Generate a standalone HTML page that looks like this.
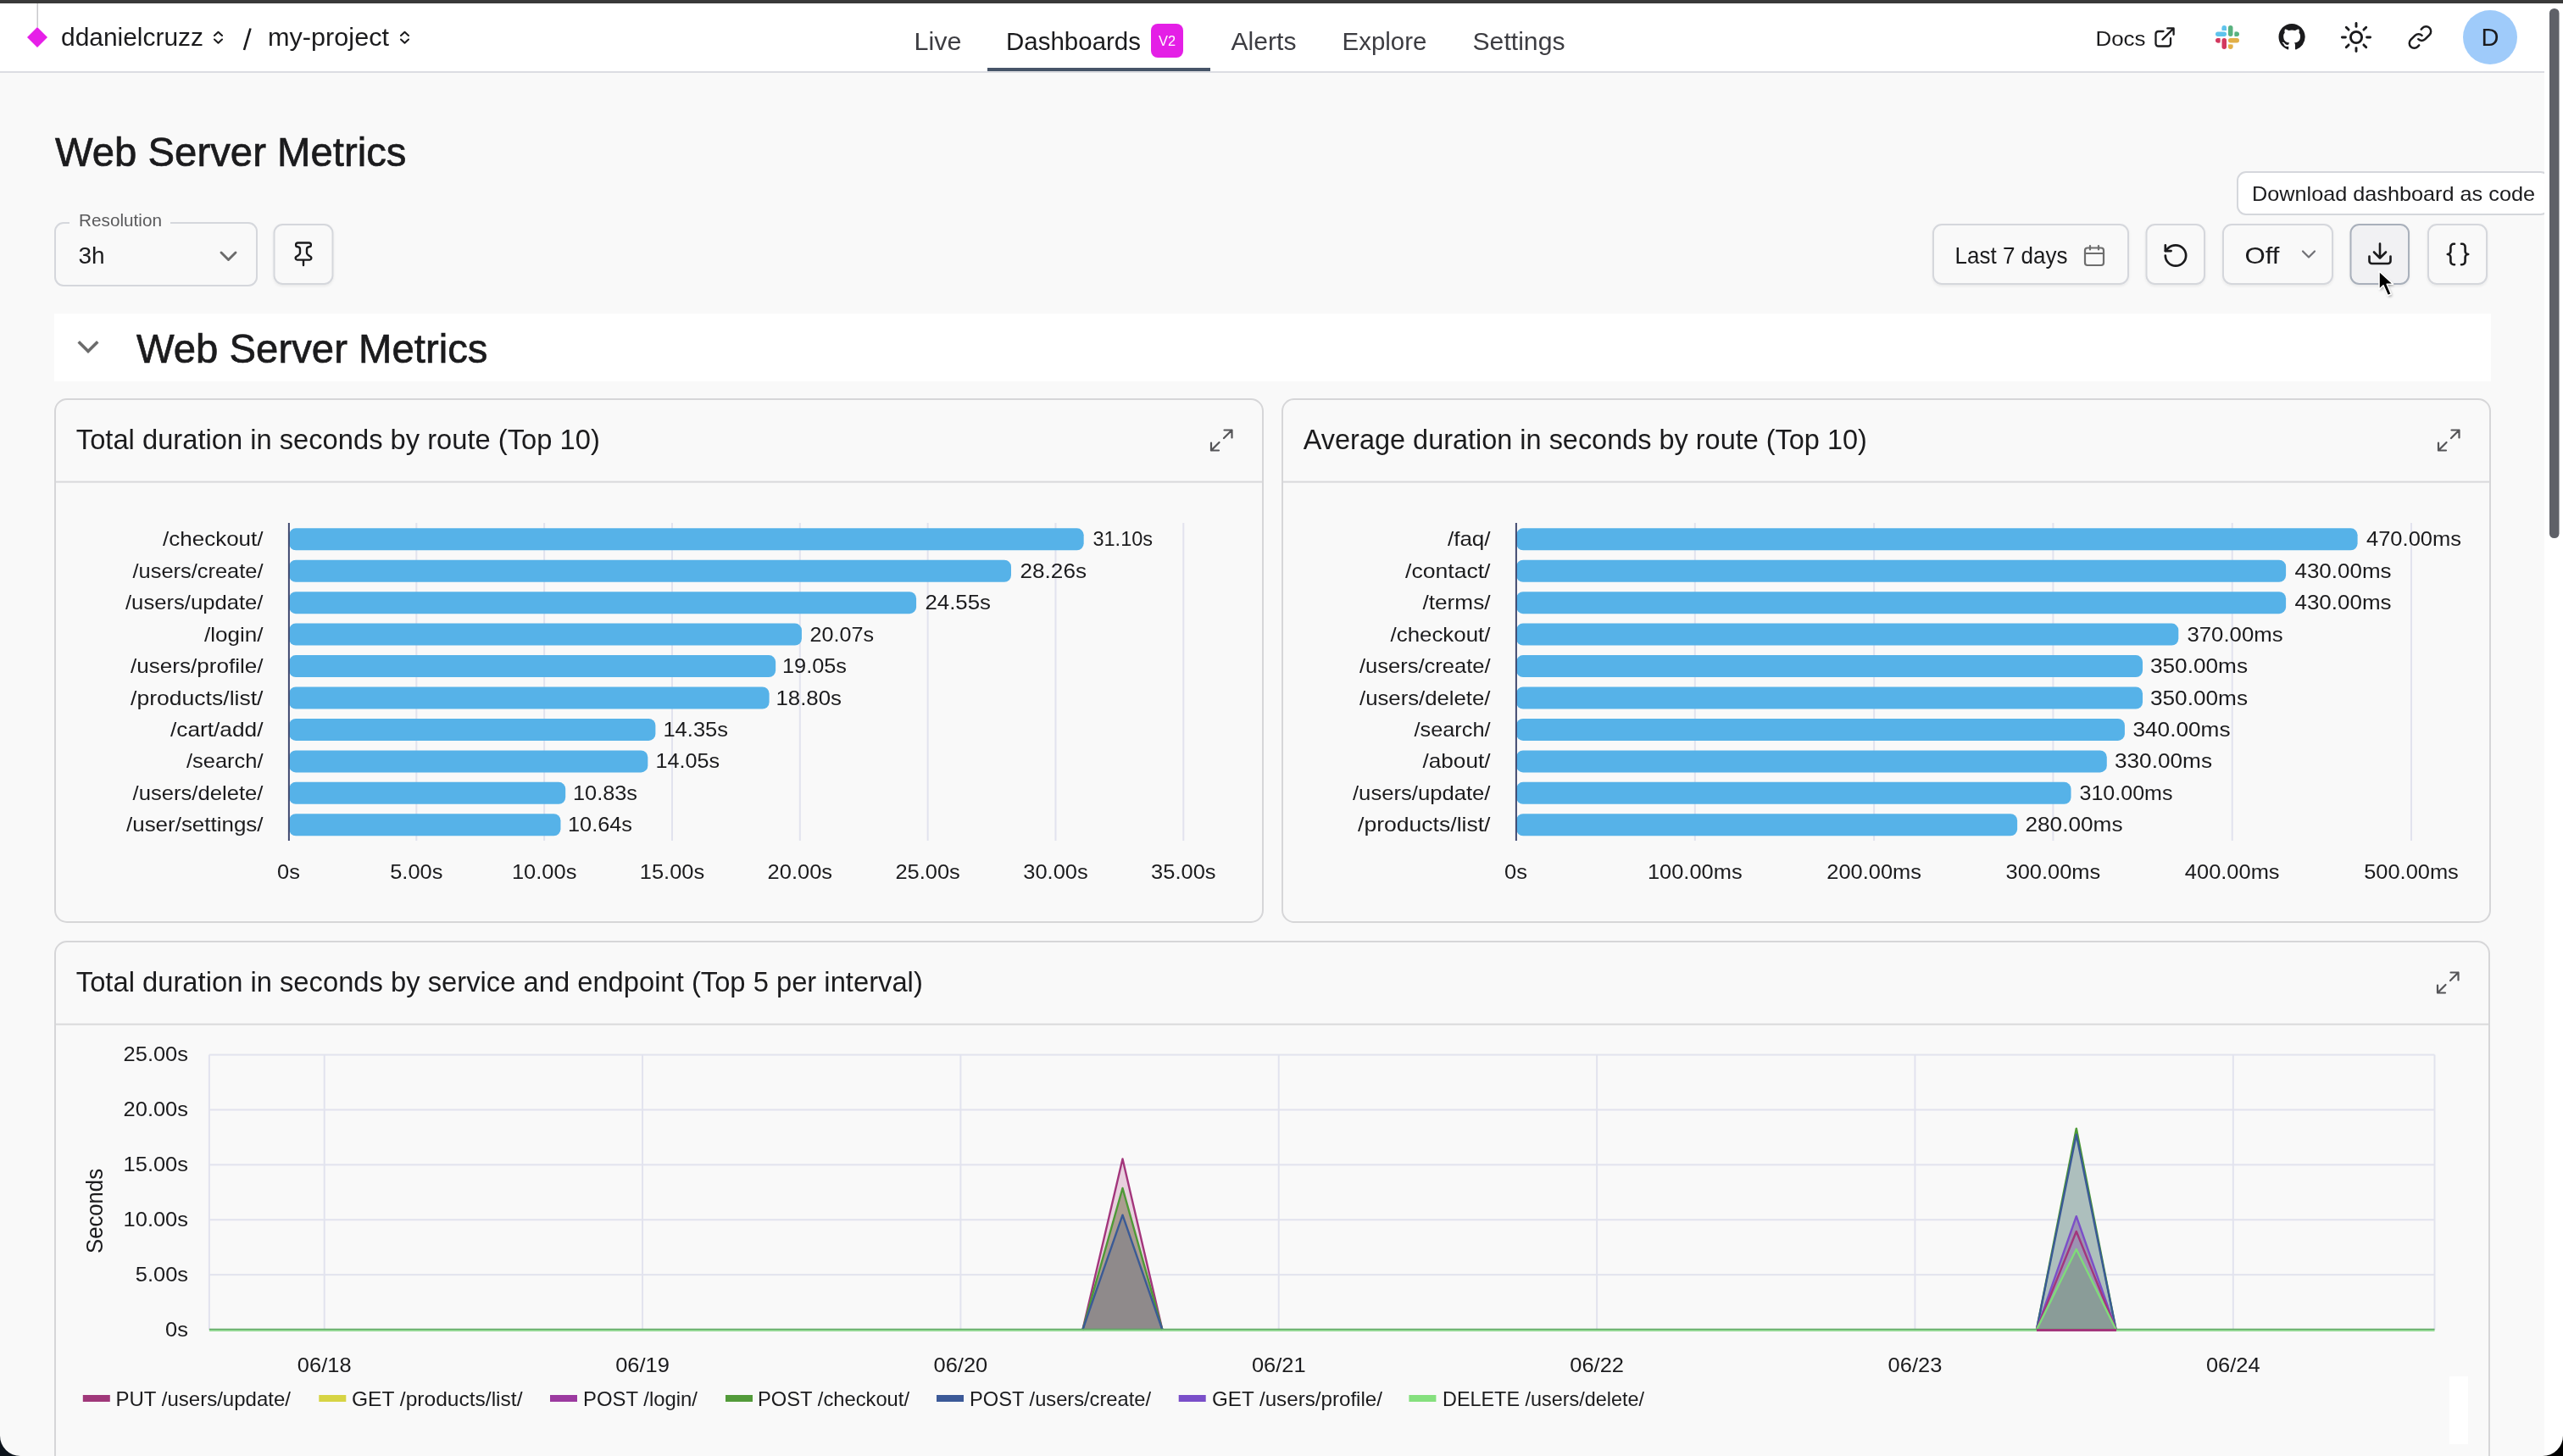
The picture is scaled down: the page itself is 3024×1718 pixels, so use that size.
<!DOCTYPE html>
<html><head><meta charset="utf-8"><title>Web Server Metrics</title>
<style>html,body{margin:0;padding:0;width:100%;height:100%;overflow:hidden;background:#f9f9f9}
svg{display:block;width:100vw;height:100vh;will-change:transform} text{font-family:"Liberation Sans", sans-serif}</style></head>
<body><svg width="3024" height="1718" viewBox="0 0 3024 1718" preserveAspectRatio="none"><defs><filter id="bsh" x="-20%" y="-20%" width="140%" height="150%"><feDropShadow dx="0" dy="1.5" stdDeviation="1.5" flood-color="#000" flood-opacity="0.07"/></filter></defs><rect x="0" y="0" width="3002" height="1718" fill="#f9f9f9"/><rect x="0" y="0" width="3024" height="4" fill="#3a3a3a"/><rect x="0" y="4" width="3002" height="80" fill="#ffffff"/><rect x="0" y="84" width="3002" height="2" fill="#dcdde2"/><rect x="43.5" y="4" width="1.5" height="28" fill="#c9c9cc"/><rect x="35.5" y="35.5" width="17" height="17" fill="#e61fe8" transform="rotate(45 44 44)"/><text x="72" y="54" font-size="29" fill="#1b1b1d" textLength="168" lengthAdjust="spacingAndGlyphs">ddanielcruzz</text><path d="M253 42 L257.5 37.8 L262 42 M253 46.5 L257.5 50.8 L262 46.5" fill="none" stroke="#1b1b1d" stroke-width="2" stroke-linecap="round" stroke-linejoin="round"/><path d="M295.5 33.5 L288 59" stroke="#1b1b1d" stroke-width="2.6" stroke-linecap="butt"/><text x="316" y="54" font-size="29" fill="#1b1b1d" textLength="143" lengthAdjust="spacingAndGlyphs">my-project</text><path d="M473 42 L477.5 37.8 L482 42 M473 46.5 L477.5 50.8 L482 46.5" fill="none" stroke="#1b1b1d" stroke-width="2" stroke-linecap="round" stroke-linejoin="round"/><text x="1078.5" y="59" font-size="29" fill="#3d3d42" textLength="56" lengthAdjust="spacingAndGlyphs">Live</text><text x="1187" y="59" font-size="29" fill="#1b1b1d" textLength="159" lengthAdjust="spacingAndGlyphs">Dashboards</text><rect x="1358" y="28" width="38" height="40" fill="#e41fe6" rx="8"/><text x="1377" y="54" font-size="17" fill="#ffffff" text-anchor="middle" textLength="20" lengthAdjust="spacingAndGlyphs">V2</text><rect x="1165" y="80" width="263" height="4" fill="#465468"/><text x="1452.5" y="59" font-size="29" fill="#3d3d42" textLength="77" lengthAdjust="spacingAndGlyphs">Alerts</text><text x="1583.5" y="59" font-size="29" fill="#3d3d42" textLength="100" lengthAdjust="spacingAndGlyphs">Explore</text><text x="1737.5" y="59" font-size="29" fill="#3d3d42" textLength="109" lengthAdjust="spacingAndGlyphs">Settings</text><text x="2472.5" y="53.5" font-size="24" fill="#1b1b1d" textLength="59" lengthAdjust="spacingAndGlyphs">Docs</text><g fill="none" stroke="#1b1b1d" stroke-width="2.3" stroke-linecap="round" stroke-linejoin="round"><path d="M2552.5 37 H2546.5 a3 3 0 0 0 -3 3 V51.5 a3 3 0 0 0 3 3 H2558 a3 3 0 0 0 3 -3 V45.2"/><path d="M2551.5 46.6 L2564.2 33.8 M2557.3 33.4 H2564.6 V40.8"/></g><g transform="translate(2614 30)"><rect x="7.5" y="0" width="5.5" height="5.5" rx="2.75" fill="#5fc3ec"/><rect x="7.5" y="3" width="5.5" height="3" fill="#5fc3ec"/><rect x="0" y="7.5" width="13" height="5.5" rx="2.75" fill="#5fc3ec"/><rect x="15" y="0" width="5.5" height="13" rx="2.75" fill="#58b27f"/><rect x="22.5" y="7.5" width="5.5" height="5.5" rx="2.75" fill="#58b27f"/><rect x="22.5" y="7.5" width="3" height="5.5" fill="#58b27f"/><rect x="15" y="15" width="13" height="5.5" rx="2.75" fill="#e2af47"/><rect x="15" y="22.5" width="5.5" height="5.5" rx="2.75" fill="#e2af47"/><rect x="15" y="22.5" width="5.5" height="3" fill="#e2af47"/><rect x="7.5" y="15" width="5.5" height="13" rx="2.75" fill="#d3385f"/><rect x="0" y="15" width="5.5" height="5.5" rx="2.75" fill="#d3385f"/><rect x="2.5" y="15" width="3" height="5.5" fill="#d3385f"/></g><path transform="translate(2688.5 28) scale(1.95)" fill="#1b1b1d" d="M8 0C3.58 0 0 3.58 0 8c0 3.54 2.29 6.53 5.47 7.59.4.07.55-.17.55-.38 0-.19-.01-.82-.01-1.49-2.01.37-2.530-.49-2.69-.94-.09-.23-.48-.94-.82-1.13-.28-.15-.68-.52-.01-.53.63-.01 1.08.58 1.23.82.72 1.21 1.87.87 2.33.66.07-.52.28-.87.51-1.07-1.78-.2-3.64-.89-3.640-3.95 0-.87.31-1.59.82-2.15-.08-.2-.36-1.02.08-2.12 0 0 .67-.21 2.2.82.64-.18 1.32-.27 2-.27.68 0 1.36.09 2 .27 1.53-1.04 2.2-.82 2.2-.82.44 1.1.16 1.92.08 2.12.51.56.82 1.27.82 2.15 0 3.07-1.87 3.75-3.65 3.95.29.25.54.73.54 1.48 0 1.07-.01 1.930-.01 2.2 0 .21.15.46.55.38A8.013 8.013 0 0016 8c0-4.42-3.58-8-8-8z"/><g stroke="#1b1b1d" stroke-width="2.9" stroke-linecap="round" fill="none"><circle cx="2780" cy="44" r="6.6"/><path d="M2792.60 44.00 L2796.60 44.00"/><path d="M2788.91 52.91 L2791.74 55.74"/><path d="M2780.00 56.60 L2780.00 60.60"/><path d="M2771.09 52.91 L2768.26 55.74"/><path d="M2767.40 44.00 L2763.40 44.00"/><path d="M2771.09 35.09 L2768.26 32.26"/><path d="M2780.00 31.40 L2780.00 27.40"/><path d="M2788.91 35.09 L2791.74 32.26"/></g><g fill="none" stroke="#1b1b1d" stroke-width="1.95" stroke-linecap="round" stroke-linejoin="round" transform="translate(2840.2 28.8) scale(1.27)"><path d="M10.3 13.7 a4.5 4.5 0 0 0 6.4 0 l4-4 a4.5 4.5 0 0 0 -6.4 -6.4 l-1.3 1.3"/><path d="M13.7 10.3 a4.5 4.5 0 0 0 -6.4 0 l-4 4 a4.5 4.5 0 0 0 6.4 6.4 l1.3 -1.3"/></g><circle cx="2938" cy="44" r="32" fill="#9fcbfa"/><text x="2938" y="53.5" font-size="29" fill="#1b1b1d" text-anchor="middle">D</text><text x="65" y="196.3" font-size="48" fill="#1b1b1d" textLength="414.5" lengthAdjust="spacingAndGlyphs" stroke="#1b1b1d" stroke-width="0.7">Web Server Metrics</text><rect x="65" y="263" width="238" height="74" fill="none" rx="10" stroke="#d5d7dc" stroke-width="2"/><rect x="82" y="255" width="119" height="14" fill="#f9f9f9"/><text x="93" y="266.8" font-size="21" fill="#5a5a5c" textLength="98" lengthAdjust="spacingAndGlyphs">Resolution</text><text x="92.5" y="310.5" font-size="28" fill="#1b1b1d">3h</text><path d="M261 298 L269.5 306.5 L278 298" fill="none" stroke="#6b6b6b" stroke-width="2.9" stroke-linecap="round" stroke-linejoin="round"/><rect x="323.5" y="265" width="69" height="70" fill="#f9f9f9" rx="10" stroke="#d5d7dc" stroke-width="2" filter="url(#bsh)"/><path fill="none" stroke="#1b1b1d" stroke-width="2.4" stroke-linecap="round" stroke-linejoin="round" d="M351.5 286.5 H364.5 A2.4 2.4 0 0 1 364.5 291.3 Q362 291.6 362 294.2 V298.3 Q362 300 363.6 301 L366.6 302.9 A2.1 2.1 0 0 1 365.4 306.6 H350.6 A2.1 2.1 0 0 1 349.4 302.9 L352.4 301 Q354 300 354 298.3 V294.2 Q354 291.6 351.5 291.3 A2.4 2.4 0 0 1 351.5 286.5 Z M358 306.6 V313"/><rect x="2281" y="265" width="230" height="70" fill="#f9f9f9" rx="10" stroke="#d5d7dc" stroke-width="2" filter="url(#bsh)"/><text x="2306.5" y="310.6" font-size="28" fill="#1b1b1d" textLength="133" lengthAdjust="spacingAndGlyphs">Last 7 days</text><g fill="none" stroke="#6e6e6e" stroke-width="2.2" stroke-linecap="round" transform="translate(2459 289.5)"><rect x="1" y="3" width="22" height="20.5" rx="3"/><path d="M1 9.5 H23 M7 0.5 V5 M17 0.5 V5"/></g><rect x="2532.5" y="265" width="68.5" height="70" fill="#f9f9f9" rx="10" stroke="#d5d7dc" stroke-width="2" filter="url(#bsh)"/><g fill="none" stroke="#1b1b1d" stroke-width="2" stroke-linecap="round" stroke-linejoin="round" transform="translate(2550.8 285.3) scale(1.35)"><path d="M3 12a9 9 0 1 0 9-9 9.75 9.75 0 0 0-6.74 2.74L3 8"/><path d="M3 3v5h5"/></g><rect x="2623" y="265" width="129" height="70" fill="#f9f9f9" rx="10" stroke="#d5d7dc" stroke-width="2" filter="url(#bsh)"/><text x="2648.5" y="310.7" font-size="28" fill="#1b1b1d" textLength="41" lengthAdjust="spacingAndGlyphs">Off</text><path d="M2717 296.5 L2724 303.5 L2731 296.5" fill="none" stroke="#707075" stroke-width="2.2" stroke-linecap="round" stroke-linejoin="round"/><rect x="2773.5" y="265" width="68.5" height="70" fill="#f1f1f3" rx="10" stroke="#a9b0bb" stroke-width="2" filter="url(#bsh)"/><g fill="none" stroke="#1b1b1d" stroke-width="2.6" stroke-linecap="round" stroke-linejoin="round"><path d="M2808 287.5 V304.5 M2801 297.5 L2808 304.5 L2815 297.5"/><path d="M2795.5 302.5 V308 a3 3 0 0 0 3 3 H2817.5 a3 3 0 0 0 3 -3 V302.5"/></g><rect x="2865" y="265" width="69" height="70" fill="#f9f9f9" rx="10" stroke="#d5d7dc" stroke-width="2" filter="url(#bsh)"/><g fill="none" stroke="#1b1b1d" stroke-width="2.6" stroke-linecap="round" stroke-linejoin="round"><path d="M2896 287.8 h-1 a3.6 3.6 0 0 0 -3.6 3.6 v5 a3.6 3.6 0 0 1 -3.6 3.6 a3.6 3.6 0 0 1 3.6 3.6 v5 a3.6 3.6 0 0 0 3.6 3.6 h1"/><path d="M2904 287.8 h1 a3.6 3.6 0 0 1 3.6 3.6 v5 a3.6 3.6 0 0 0 3.6 3.6 a3.6 3.6 0 0 0 -3.6 3.6 v5 a3.6 3.6 0 0 1 -3.6 3.6 h-1"/></g><rect x="2640" y="203" width="367.5" height="50" fill="#ffffff" rx="10" stroke="#d5d7dc" stroke-width="2"/><text x="2657" y="237" font-size="24" fill="#1b1b1d" textLength="334" lengthAdjust="spacingAndGlyphs">Download dashboard as code</text><defs><filter id="csh" x="-50%" y="-50%" width="200%" height="200%"><feGaussianBlur stdDeviation="1.6"/></filter></defs><path d="M2807 320 L2807 341.5 L2812 336.8 L2817.3 348.8 L2821.3 347 L2816.2 335.3 L2823.6 335.2 Z" fill="#000" fill-opacity="0.35" transform="translate(1.2 2)" filter="url(#csh)"/><path d="M2807 320 L2807 341.5 L2812 336.8 L2817.3 348.8 L2821.3 347 L2816.2 335.3 L2823.6 335.2 Z" fill="#000" stroke="#fff" stroke-width="1.6" stroke-linejoin="round"/><rect x="64" y="370" width="2875" height="80" fill="#ffffff"/><path d="M94 404.5 L104 414.5 L114 404.5" fill="none" stroke="#6b6b6b" stroke-width="3.6" stroke-linecap="square"/><text x="161" y="428.4" font-size="48" fill="#1b1b1d" textLength="414.5" lengthAdjust="spacingAndGlyphs" stroke="#1b1b1d" stroke-width="0.7">Web Server Metrics</text><rect x="65" y="471" width="1425" height="617" fill="#f9f9f9" rx="14" stroke="#d6d6d8" stroke-width="2"/><rect x="66" y="567.6" width="1423" height="2" fill="#d9d9db"/><text x="89.8" y="530" font-size="33" fill="#1b1b1d" textLength="618" lengthAdjust="spacingAndGlyphs">Total duration in seconds by route (Top 10)</text><g fill="none" stroke="#555558" stroke-width="2.2" stroke-linecap="round" stroke-linejoin="round" transform="translate(1428 506)"><path d="M16.5 1.5 H25.5 V10.5 M25.5 1.5 L16 11 M10 25.5 H1 V16.5 M1 25.5 L10.5 16"/></g><rect x="1513" y="471" width="1425" height="617" fill="#f9f9f9" rx="14" stroke="#d6d6d8" stroke-width="2"/><rect x="1514" y="567.6" width="1423" height="2" fill="#d9d9db"/><text x="1537.8" y="530" font-size="33" fill="#1b1b1d" textLength="665" lengthAdjust="spacingAndGlyphs">Average duration in seconds by route (Top 10)</text><g fill="none" stroke="#555558" stroke-width="2.2" stroke-linecap="round" stroke-linejoin="round" transform="translate(2876 506)"><path d="M16.5 1.5 H25.5 V10.5 M25.5 1.5 L16 11 M10 25.5 H1 V16.5 M1 25.5 L10.5 16"/></g><rect x="65" y="1111" width="2872" height="688" fill="#f9f9f9" rx="14" stroke="#d6d6d8" stroke-width="2"/><rect x="66" y="1207.6" width="2870" height="2" fill="#d9d9db"/><text x="89.8" y="1170" font-size="33" fill="#1b1b1d" textLength="999" lengthAdjust="spacingAndGlyphs">Total duration in seconds by service and endpoint (Top 5 per interval)</text><g fill="none" stroke="#555558" stroke-width="2.2" stroke-linecap="round" stroke-linejoin="round" transform="translate(2875 1146)"><path d="M16.5 1.5 H25.5 V10.5 M25.5 1.5 L16 11 M10 25.5 H1 V16.5 M1 25.5 L10.5 16"/></g><rect x="490.33000000000004" y="617" width="2" height="375" fill="#e2e3ee"/><rect x="641.1600000000001" y="617" width="2" height="375" fill="#e2e3ee"/><rect x="791.99" y="617" width="2" height="375" fill="#e2e3ee"/><rect x="942.82" y="617" width="2" height="375" fill="#e2e3ee"/><rect x="1093.65" y="617" width="2" height="375" fill="#e2e3ee"/><rect x="1244.48" y="617" width="2" height="375" fill="#e2e3ee"/><rect x="1395.3100000000002" y="617" width="2" height="375" fill="#e2e3ee"/><rect x="341.0" y="623.3" width="937.6626" height="26" fill="#56b2e8" rx="8"/><text x="192.0" y="644.3" font-size="24" fill="#1b1b1d" textLength="118.5" lengthAdjust="spacingAndGlyphs">/checkout/</text><text x="1289.47" y="644.3" font-size="24" fill="#1b1b1d" textLength="70.56" lengthAdjust="spacingAndGlyphs">31.10s</text><rect x="341.0" y="660.74" width="851.99116" height="26" fill="#56b2e8" rx="8"/><text x="156.5" y="681.74" font-size="24" fill="#1b1b1d" textLength="154.01" lengthAdjust="spacingAndGlyphs">/users/create/</text><text x="1203.47" y="681.74" font-size="24" fill="#1b1b1d" textLength="78.54" lengthAdjust="spacingAndGlyphs">28.26s</text><rect x="341.0" y="698.18" width="740.0753000000001" height="26" fill="#56b2e8" rx="8"/><text x="148.0" y="719.18" font-size="24" fill="#1b1b1d" textLength="162.5" lengthAdjust="spacingAndGlyphs">/users/update/</text><text x="1091.47" y="719.18" font-size="24" fill="#1b1b1d" textLength="77.54" lengthAdjust="spacingAndGlyphs">24.55s</text><rect x="341.0" y="735.6199999999999" width="604.9316200000001" height="26" fill="#56b2e8" rx="8"/><text x="241.0" y="756.6199999999999" font-size="24" fill="#1b1b1d" textLength="69.5" lengthAdjust="spacingAndGlyphs">/login/</text><text x="955.47" y="756.6199999999999" font-size="24" fill="#1b1b1d" textLength="75.54" lengthAdjust="spacingAndGlyphs">20.07s</text><rect x="341.0" y="773.06" width="574.1623000000001" height="26" fill="#56b2e8" rx="8"/><text x="154.0" y="794.06" font-size="24" fill="#1b1b1d" textLength="156.5" lengthAdjust="spacingAndGlyphs">/users/profile/</text><text x="922.96" y="794.06" font-size="24" fill="#1b1b1d" textLength="76.05" lengthAdjust="spacingAndGlyphs">19.05s</text><rect x="341.0" y="810.5" width="566.6208" height="26" fill="#56b2e8" rx="8"/><text x="154.0" y="831.5" font-size="24" fill="#1b1b1d" textLength="156.51" lengthAdjust="spacingAndGlyphs">/products/list/</text><text x="915.43" y="831.5" font-size="24" fill="#1b1b1d" textLength="77.61" lengthAdjust="spacingAndGlyphs">18.80s</text><rect x="341.0" y="847.9399999999999" width="432.3821" height="26" fill="#56b2e8" rx="8"/><text x="201.0" y="868.9399999999999" font-size="24" fill="#1b1b1d" textLength="109.5" lengthAdjust="spacingAndGlyphs">/cart/add/</text><text x="782.44" y="868.9399999999999" font-size="24" fill="#1b1b1d" textLength="76.59" lengthAdjust="spacingAndGlyphs">14.35s</text><rect x="341.0" y="885.3799999999999" width="423.33230000000003" height="26" fill="#56b2e8" rx="8"/><text x="219.99" y="906.3799999999999" font-size="24" fill="#1b1b1d" textLength="90.51" lengthAdjust="spacingAndGlyphs">/search/</text><text x="773.43" y="906.3799999999999" font-size="24" fill="#1b1b1d" textLength="75.62" lengthAdjust="spacingAndGlyphs">14.05s</text><rect x="341.0" y="922.8199999999999" width="326.19778" height="26" fill="#56b2e8" rx="8"/><text x="156.5" y="943.8199999999999" font-size="24" fill="#1b1b1d" textLength="154.0" lengthAdjust="spacingAndGlyphs">/users/delete/</text><text x="675.96" y="943.8199999999999" font-size="24" fill="#1b1b1d" textLength="76.06" lengthAdjust="spacingAndGlyphs">10.83s</text><rect x="341.0" y="960.26" width="320.46624" height="26" fill="#56b2e8" rx="8"/><text x="149.0" y="981.26" font-size="24" fill="#1b1b1d" textLength="161.5" lengthAdjust="spacingAndGlyphs">/user/settings/</text><text x="669.96" y="981.26" font-size="24" fill="#1b1b1d" textLength="76.06" lengthAdjust="spacingAndGlyphs">10.64s</text><rect x="339.9" y="617" width="2" height="375" fill="#414a70"/><text x="340.5" y="1037" font-size="24" fill="#1b1b1d" text-anchor="middle" textLength="26.9" lengthAdjust="spacingAndGlyphs">0s</text><text x="491.33000000000004" y="1037" font-size="24" fill="#1b1b1d" text-anchor="middle" textLength="62.2" lengthAdjust="spacingAndGlyphs">5.00s</text><text x="642.1600000000001" y="1037" font-size="24" fill="#1b1b1d" text-anchor="middle" textLength="76.4" lengthAdjust="spacingAndGlyphs">10.00s</text><text x="792.99" y="1037" font-size="24" fill="#1b1b1d" text-anchor="middle" textLength="76.4" lengthAdjust="spacingAndGlyphs">15.00s</text><text x="943.82" y="1037" font-size="24" fill="#1b1b1d" text-anchor="middle" textLength="76.4" lengthAdjust="spacingAndGlyphs">20.00s</text><text x="1094.65" y="1037" font-size="24" fill="#1b1b1d" text-anchor="middle" textLength="76.4" lengthAdjust="spacingAndGlyphs">25.00s</text><text x="1245.48" y="1037" font-size="24" fill="#1b1b1d" text-anchor="middle" textLength="76.4" lengthAdjust="spacingAndGlyphs">30.00s</text><text x="1396.3100000000002" y="1037" font-size="24" fill="#1b1b1d" text-anchor="middle" textLength="76.4" lengthAdjust="spacingAndGlyphs">35.00s</text><rect x="1998.8" y="617" width="2" height="375" fill="#e2e3ee"/><rect x="2210.1" y="617" width="2" height="375" fill="#e2e3ee"/><rect x="2421.4" y="617" width="2" height="375" fill="#e2e3ee"/><rect x="2632.7" y="617" width="2" height="375" fill="#e2e3ee"/><rect x="2844.0" y="617" width="2" height="375" fill="#e2e3ee"/><rect x="1789.0" y="623.3" width="992.6100000000001" height="26" fill="#56b2e8" rx="8"/><text x="1707.99" y="644.3" font-size="24" fill="#1b1b1d" textLength="50.52" lengthAdjust="spacingAndGlyphs">/faq/</text><text x="2792.0" y="644.3" font-size="24" fill="#1b1b1d" textLength="112.01" lengthAdjust="spacingAndGlyphs">470.00ms</text><rect x="1789.0" y="660.74" width="908.09" height="26" fill="#56b2e8" rx="8"/><text x="1658.0" y="681.74" font-size="24" fill="#1b1b1d" textLength="100.51" lengthAdjust="spacingAndGlyphs">/contact/</text><text x="2707.49" y="681.74" font-size="24" fill="#1b1b1d" textLength="114.01" lengthAdjust="spacingAndGlyphs">430.00ms</text><rect x="1789.0" y="698.18" width="908.09" height="26" fill="#56b2e8" rx="8"/><text x="1678.5" y="719.18" font-size="24" fill="#1b1b1d" textLength="80.0" lengthAdjust="spacingAndGlyphs">/terms/</text><text x="2707.49" y="719.18" font-size="24" fill="#1b1b1d" textLength="114.01" lengthAdjust="spacingAndGlyphs">430.00ms</text><rect x="1789.0" y="735.6199999999999" width="781.3100000000001" height="26" fill="#56b2e8" rx="8"/><text x="1640.5" y="756.6199999999999" font-size="24" fill="#1b1b1d" textLength="118.0" lengthAdjust="spacingAndGlyphs">/checkout/</text><text x="2580.48" y="756.6199999999999" font-size="24" fill="#1b1b1d" textLength="113.04" lengthAdjust="spacingAndGlyphs">370.00ms</text><rect x="1789.0" y="773.06" width="739.0500000000001" height="26" fill="#56b2e8" rx="8"/><text x="1603.99" y="794.06" font-size="24" fill="#1b1b1d" textLength="154.51" lengthAdjust="spacingAndGlyphs">/users/create/</text><text x="2536.98" y="794.06" font-size="24" fill="#1b1b1d" textLength="115.04" lengthAdjust="spacingAndGlyphs">350.00ms</text><rect x="1789.0" y="810.5" width="739.0500000000001" height="26" fill="#56b2e8" rx="8"/><text x="1603.99" y="831.5" font-size="24" fill="#1b1b1d" textLength="154.51" lengthAdjust="spacingAndGlyphs">/users/delete/</text><text x="2536.98" y="831.5" font-size="24" fill="#1b1b1d" textLength="115.04" lengthAdjust="spacingAndGlyphs">350.00ms</text><rect x="1789.0" y="847.9399999999999" width="717.9200000000001" height="26" fill="#56b2e8" rx="8"/><text x="1668.5" y="868.9399999999999" font-size="24" fill="#1b1b1d" textLength="90.0" lengthAdjust="spacingAndGlyphs">/search/</text><text x="2516.47" y="868.9399999999999" font-size="24" fill="#1b1b1d" textLength="115.04" lengthAdjust="spacingAndGlyphs">340.00ms</text><rect x="1789.0" y="885.3799999999999" width="696.79" height="26" fill="#56b2e8" rx="8"/><text x="1678.5" y="906.3799999999999" font-size="24" fill="#1b1b1d" textLength="80.0" lengthAdjust="spacingAndGlyphs">/about/</text><text x="2494.98" y="906.3799999999999" font-size="24" fill="#1b1b1d" textLength="115.04" lengthAdjust="spacingAndGlyphs">330.00ms</text><rect x="1789.0" y="922.8199999999999" width="654.5300000000001" height="26" fill="#56b2e8" rx="8"/><text x="1596.0" y="943.8199999999999" font-size="24" fill="#1b1b1d" textLength="162.5" lengthAdjust="spacingAndGlyphs">/users/update/</text><text x="2453.48" y="943.8199999999999" font-size="24" fill="#1b1b1d" textLength="110.02" lengthAdjust="spacingAndGlyphs">310.00ms</text><rect x="1789.0" y="960.26" width="591.14" height="26" fill="#56b2e8" rx="8"/><text x="1602.0" y="981.26" font-size="24" fill="#1b1b1d" textLength="156.5" lengthAdjust="spacingAndGlyphs">/products/list/</text><text x="2389.47" y="981.26" font-size="24" fill="#1b1b1d" textLength="115.04" lengthAdjust="spacingAndGlyphs">280.00ms</text><rect x="1787.9" y="617" width="2" height="375" fill="#414a70"/><text x="1788.5" y="1037" font-size="24" fill="#1b1b1d" text-anchor="middle" textLength="26.9" lengthAdjust="spacingAndGlyphs">0s</text><text x="1999.8" y="1037" font-size="24" fill="#1b1b1d" text-anchor="middle" textLength="111.7" lengthAdjust="spacingAndGlyphs">100.00ms</text><text x="2211.1" y="1037" font-size="24" fill="#1b1b1d" text-anchor="middle" textLength="111.7" lengthAdjust="spacingAndGlyphs">200.00ms</text><text x="2422.4" y="1037" font-size="24" fill="#1b1b1d" text-anchor="middle" textLength="111.7" lengthAdjust="spacingAndGlyphs">300.00ms</text><text x="2633.7" y="1037" font-size="24" fill="#1b1b1d" text-anchor="middle" textLength="111.7" lengthAdjust="spacingAndGlyphs">400.00ms</text><text x="2845.0" y="1037" font-size="24" fill="#1b1b1d" text-anchor="middle" textLength="111.7" lengthAdjust="spacingAndGlyphs">500.00ms</text><rect x="246.9" y="1568.0" width="2625.6" height="2" fill="#e2e3ee"/><text x="222" y="1576.8" font-size="24" fill="#1b1b1d" text-anchor="end" textLength="26.9" lengthAdjust="spacingAndGlyphs">0s</text><rect x="246.9" y="1503.12" width="2625.6" height="2" fill="#e2e3ee"/><text x="222" y="1511.9199999999998" font-size="24" fill="#1b1b1d" text-anchor="end" textLength="62.2" lengthAdjust="spacingAndGlyphs">5.00s</text><rect x="246.9" y="1438.24" width="2625.6" height="2" fill="#e2e3ee"/><text x="222" y="1447.04" font-size="24" fill="#1b1b1d" text-anchor="end" textLength="76.4" lengthAdjust="spacingAndGlyphs">10.00s</text><rect x="246.9" y="1373.3600000000001" width="2625.6" height="2" fill="#e2e3ee"/><text x="222" y="1382.16" font-size="24" fill="#1b1b1d" text-anchor="end" textLength="76.4" lengthAdjust="spacingAndGlyphs">15.00s</text><rect x="246.9" y="1308.48" width="2625.6" height="2" fill="#e2e3ee"/><text x="222" y="1317.28" font-size="24" fill="#1b1b1d" text-anchor="end" textLength="76.4" lengthAdjust="spacingAndGlyphs">20.00s</text><rect x="246.9" y="1243.6" width="2625.6" height="2" fill="#e2e3ee"/><text x="222" y="1252.3999999999999" font-size="24" fill="#1b1b1d" text-anchor="end" textLength="76.4" lengthAdjust="spacingAndGlyphs">25.00s</text><rect x="245.9" y="1244.6" width="2" height="324.4000000000001" fill="#e2e3ee"/><rect x="2871.5" y="1244.6" width="2" height="324.4000000000001" fill="#e2e3ee"/><rect x="381.7" y="1244.6" width="2" height="324.4000000000001" fill="#e2e3ee"/><text x="382.7" y="1619" font-size="24" fill="#1b1b1d" text-anchor="middle" textLength="63.7" lengthAdjust="spacingAndGlyphs">06/18</text><rect x="757.05" y="1244.6" width="2" height="324.4000000000001" fill="#e2e3ee"/><text x="758.05" y="1619" font-size="24" fill="#1b1b1d" text-anchor="middle" textLength="63.7" lengthAdjust="spacingAndGlyphs">06/19</text><rect x="1132.4" y="1244.6" width="2" height="324.4000000000001" fill="#e2e3ee"/><text x="1133.4" y="1619" font-size="24" fill="#1b1b1d" text-anchor="middle" textLength="63.7" lengthAdjust="spacingAndGlyphs">06/20</text><rect x="1507.7500000000002" y="1244.6" width="2" height="324.4000000000001" fill="#e2e3ee"/><text x="1508.7500000000002" y="1619" font-size="24" fill="#1b1b1d" text-anchor="middle" textLength="63.7" lengthAdjust="spacingAndGlyphs">06/21</text><rect x="1883.1000000000001" y="1244.6" width="2" height="324.4000000000001" fill="#e2e3ee"/><text x="1884.1000000000001" y="1619" font-size="24" fill="#1b1b1d" text-anchor="middle" textLength="63.7" lengthAdjust="spacingAndGlyphs">06/22</text><rect x="2258.45" y="1244.6" width="2" height="324.4000000000001" fill="#e2e3ee"/><text x="2259.45" y="1619" font-size="24" fill="#1b1b1d" text-anchor="middle" textLength="63.7" lengthAdjust="spacingAndGlyphs">06/23</text><rect x="2633.8" y="1244.6" width="2" height="324.4000000000001" fill="#e2e3ee"/><text x="2634.8" y="1619" font-size="24" fill="#1b1b1d" text-anchor="middle" textLength="63.7" lengthAdjust="spacingAndGlyphs">06/24</text><text transform="translate(121.3 1429) rotate(-90)" x="0" y="0" font-size="28.5" fill="#1b1b1d" text-anchor="middle" textLength="100" lengthAdjust="spacingAndGlyphs">Seconds</text><path d="M1277.4 1569 L1324.5 1367.4 L1371.4 1569 Z" fill="#e8d0de" fill-opacity="1" stroke="none"/><path d="M1277.4 1569 L1324.5 1402 L1371.4 1569 Z" fill="#ab9d90" fill-opacity="1" stroke="none"/><path d="M1277.4 1569 L1324.5 1433.7 L1371.4 1569 Z" fill="#8f8a8b" fill-opacity="1" stroke="none"/><path d="M1277.4 1569 L1324.5 1367.4 L1371.4 1569" fill="none" stroke="#a3367c" stroke-width="2.4" stroke-linejoin="round"/><path d="M1277.4 1569 L1324.5 1402 L1371.4 1569" fill="none" stroke="#4e9a36" stroke-width="2.4" stroke-linejoin="round"/><path d="M1277.4 1569 L1324.5 1433.7 L1371.4 1569" fill="none" stroke="#3a5a96" stroke-width="2.4" stroke-linejoin="round"/><path d="M2402.9 1569 L2449.8 1331.6 L2496.6 1569 Z" fill="#adbfbd" fill-opacity="1" stroke="none"/><path d="M2402.9 1569 L2449.8 1435.2 L2496.6 1569 Z" fill="#9c93b3" fill-opacity="1" stroke="none"/><path d="M2402.9 1569 L2449.8 1474 L2496.6 1569 Z" fill="#8a9c98" fill-opacity="1" stroke="none"/><path d="M2402.9 1569 L2449.8 1331.6 L2496.6 1569" fill="none" stroke="#4e9a36" stroke-width="2.4" stroke-linejoin="round"/><path d="M2402.9 1569 L2449.8 1338.7 L2496.6 1569" fill="none" stroke="#3a5a96" stroke-width="2.4" stroke-linejoin="round"/><path d="M2402.9 1569 L2449.8 1435.2 L2496.6 1569" fill="none" stroke="#7b4fc8" stroke-width="2.4" stroke-linejoin="round"/><path d="M2402.9 1569 L2449.8 1453 L2496.6 1569" fill="none" stroke="#a3367c" stroke-width="2.4" stroke-linejoin="round"/><path d="M2402.9 1569 L2449.8 1474 L2496.6 1569" fill="none" stroke="#7fdc7a" stroke-width="2.4" stroke-linejoin="round"/><rect x="246.9" y="1567.7" width="2625.6" height="1.6" fill="#5fa862"/><rect x="246.9" y="1569.3" width="2625.6" height="1.5" fill="#7fd47e"/><rect x="2403" y="1568" width="94" height="3" fill="#a3367c"/><rect x="97.8" y="1646" width="32" height="8" fill="#a0387a"/><text x="136.49" y="1659.2" font-size="24" fill="#1b1b1d" textLength="206.51" lengthAdjust="spacingAndGlyphs">PUT /users/update/</text><rect x="376.3" y="1646" width="32" height="8" fill="#d7d444"/><text x="415.0" y="1659.2" font-size="24" fill="#1b1b1d" textLength="201.5" lengthAdjust="spacingAndGlyphs">GET /products/list/</text><rect x="649" y="1646" width="32" height="8" fill="#9c3aa0"/><text x="687.99" y="1659.2" font-size="24" fill="#1b1b1d" textLength="135.01" lengthAdjust="spacingAndGlyphs">POST /login/</text><rect x="856" y="1646" width="32" height="8" fill="#539b3a"/><text x="893.99" y="1659.2" font-size="24" fill="#1b1b1d" textLength="179.01" lengthAdjust="spacingAndGlyphs">POST /checkout/</text><rect x="1105" y="1646" width="32" height="8" fill="#3c5a98"/><text x="1143.98" y="1659.2" font-size="24" fill="#1b1b1d" textLength="214.02" lengthAdjust="spacingAndGlyphs">POST /users/create/</text><rect x="1390.7" y="1646" width="32" height="8" fill="#7a4fc9"/><text x="1430.0" y="1659.2" font-size="24" fill="#1b1b1d" textLength="201.01" lengthAdjust="spacingAndGlyphs">GET /users/profile/</text><rect x="1662.4" y="1646" width="32" height="8" fill="#85e07e"/><text x="1701.99" y="1659.2" font-size="24" fill="#1b1b1d" textLength="238.01" lengthAdjust="spacingAndGlyphs">DELETE /users/delete/</text><rect x="2890" y="1624" width="22" height="80" fill="#ffffff"/><rect x="3002" y="4" width="22" height="1714" fill="#ffffff"/><rect x="3008" y="10" width="11.5" height="625" fill="#5f6168" rx="5.5"/><path d="M0 1694 V1718 H24 A24 24 0 0 1 0 1694 Z" fill="#0d141c"/><path d="M3024 1694 V1718 H3000 A24 24 0 0 0 3024 1694 Z" fill="#000"/></svg></body></html>
